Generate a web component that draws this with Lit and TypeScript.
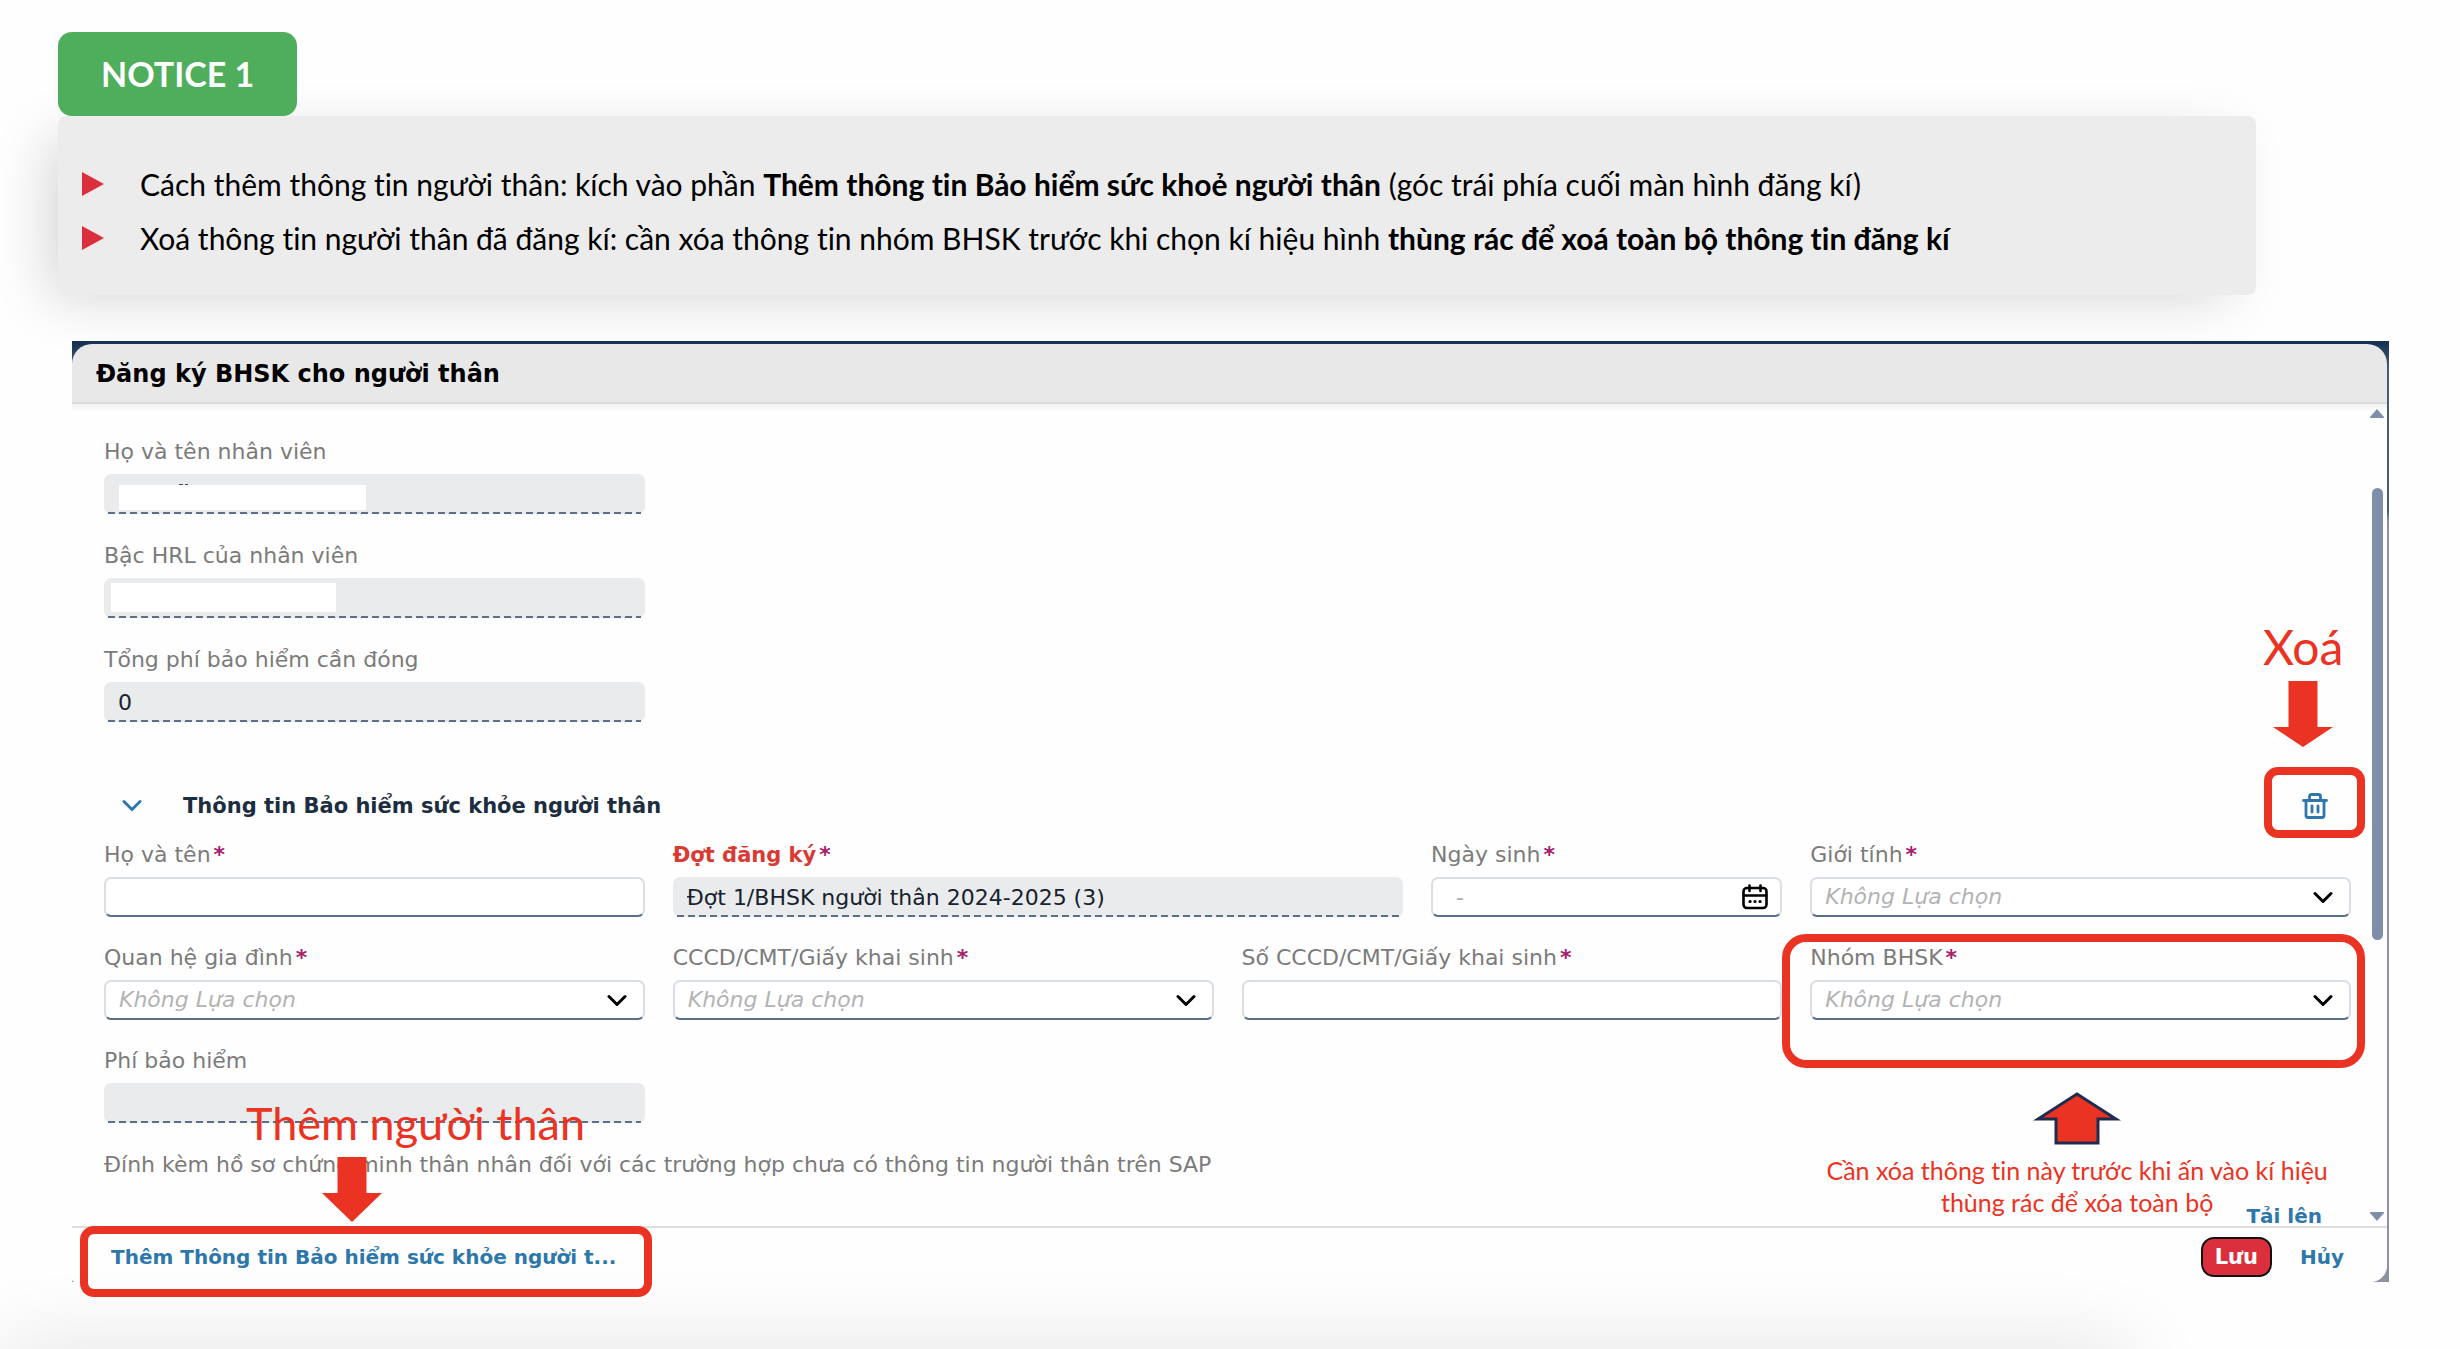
import { LitElement, html, css, nothing, TemplateResult } from "lit";
import { customElement } from "lit/decorators.js";
import { classMap } from "lit/directives/class-map.js";

type Kind = "text" | "readonly" | "select" | "date";

interface Field {
  id: string;
  label: string;
  kind: Kind;
  span: number;
  value?: string;
  required?: boolean;
  alert?: boolean;
  mask?: "wide" | "narrow";
  ringed?: boolean;
}

const employeeFields: Field[] = [
  { id: "emp-name", label: "Họ và tên nhân viên", kind: "readonly", span: 3, mask: "wide" },
  { id: "emp-level", label: "Bậc HRL của nhân viên", kind: "readonly", span: 3, mask: "narrow" },
  { id: "emp-total", label: "Tổng phí bảo hiểm cần đóng", kind: "readonly", span: 3, value: "0" },
];

const relativeFields: Field[] = [
  { id: "rel-name", label: "Họ và tên", kind: "text", span: 3, required: true },
  { id: "rel-round", label: "Đợt đăng ký", kind: "readonly", span: 4, required: true, alert: true, value: "Đợt 1/BHSK người thân 2024-2025 (3)" },
  { id: "rel-birth", label: "Ngày sinh", kind: "date", span: 2, required: true },
  { id: "rel-gender", label: "Giới tính", kind: "select", span: 3, required: true },
  { id: "rel-kin", label: "Quan hệ gia đình", kind: "select", span: 3, required: true },
  { id: "rel-doc", label: "CCCD/CMT/Giấy khai sinh", kind: "select", span: 3, required: true },
  { id: "rel-docno", label: "Số CCCD/CMT/Giấy khai sinh", kind: "text", span: 3, required: true },
  { id: "rel-group", label: "Nhóm BHSK", kind: "select", span: 3, required: true, ringed: true },
  { id: "rel-fee", label: "Phí bảo hiểm", kind: "readonly", span: 3 },
];

@customElement("app-root")
export class AppRoot extends LitElement {
  static styles = css`
    :host {
      display: block;
      position: relative;
      box-sizing: border-box;
      min-height: 100vh;
      padding-top: 32px;
      overflow: hidden;
      background: #fefefe;
      color: #000;
      font-family: "DejaVu Sans", Verdana, sans-serif;
      font-size: 22px;
      line-height: 24px;
      font-variant-ligatures: none;
    }
    * { box-sizing: border-box; }
    button, input, select { font: inherit; color: inherit; margin: 0; }
    button { background: none; border: 0; padding: 0; cursor: pointer; }
    svg { display: block; }

    .badge {
      position: relative;
      width: fit-content;
      margin: 0 0 0 58px;
      padding: 0 43px;
      border-radius: 14px;
      background: #4fae5c;
      color: #fff;
      font-family: Lato, sans-serif;
      font-weight: 700;
      font-size: 34px;
      line-height: 84px;
    }
    .notice {
      margin: 0 204px 0 58px;
      padding: 41px 24px 30px;
      border-radius: 8px;
      background: #ececec;
      box-shadow: -18px 12px 56px -10px rgba(0, 0, 0, 0.17);
      font-family: Lato, sans-serif;
      font-size: 30px;
      line-height: 54px;
    }
    .notice ul { list-style: none; margin: 0; padding: 0; }
    .notice li { display: flex; align-items: center; gap: 36px; }
    .bullet { flex: none; width: 22px; height: 24px; }

    .dialog {
      margin: 46px 71px 0 72px;
      padding: 3px 2px 0 0;
      background: linear-gradient(#14304f 0, #4a5a72 28px, #4a5a72 170px, #8d939c 180px);
    }
    .title {
      margin: 0;
      padding: 0 24px;
      height: 60px;
      border-radius: 20px 20px 0 0;
      border-bottom: 2px solid #dcdcdc;
      background: #e8e8e8;
      font-size: 24px;
      line-height: 60px;
    }
    .body {
      display: flex;
      gap: 20px;
      padding: 0 4px 0 32px;
      background: linear-gradient(#f2f2f2, #fefefe 8px);
    }
    .form { flex: 1; min-width: 0; padding-top: 36px; }
    .grid {
      display: grid;
      grid-template-columns: repeat(12, minmax(0, 1fr));
      column-gap: 28px;
      row-gap: 30px;
    }
    .relative { row-gap: 29px; }
    .single { grid-column: 1 / span 3; }
    .s2 { grid-column: span 2; }
    .s3 { grid-column: span 3; }
    .s4 { grid-column: span 4; }
    .field { position: relative; display: flex; flex-direction: column; gap: 10px; }
    .label { color: #7b7b7b; white-space: nowrap; }
    .alert { color: #d93a32; font-weight: 700; font-size: 21px; }
    .star { color: #a8206b; font-weight: 700; margin-left: 3px; }
    .box { position: relative; display: flex; }
    .control {
      width: 100%;
      height: 40px;
      padding: 0 13px;
      border: 2px solid #d9dfe5;
      border-bottom-color: #5b6f8a;
      border-radius: 7px;
      background: #fff;
      color: #17222f;
      outline: none;
      appearance: none;
    }
    .readonly {
      border: 0;
      background: #eaebed;
      padding: 0 14px;
    }
    .dashes {
      position: absolute;
      left: 4px;
      right: 4px;
      bottom: 0;
      height: 2px;
      background: repeating-linear-gradient(90deg, #5b6f8a 0 7px, transparent 7px 11px);
    }
    .select { font-style: italic; color: #b3b3b3; }
    .date::placeholder { color: #a9a9a9; }
    .date { padding-left: 23px; }
    .chevron { position: absolute; right: 18px; top: 14px; pointer-events: none; }
    .calendar { position: absolute; right: 14px; top: 7px; }
    .mask { position: absolute; background: #fff; }
    .wide { left: 15px; right: 279px; top: 11px; bottom: 4px; }
    .narrow { left: 7px; right: 309px; top: 5px; bottom: 6px; }
    .tilde { position: absolute; left: 75px; top: 9px; }

    .section {
      display: flex;
      align-items: center;
      height: 61px;
      margin: 53px 0 7px;
      padding: 0 23px 0 18px;
    }
    .section h2 {
      flex: 1;
      margin: 0 0 0 41px;
      font-size: 21px;
      color: #1d2d40;
    }
    .trash { position: relative; color: #2e77ab; }

    .attach { position: relative; margin: 30px 0 0; color: #7b7b7b; }
    .upload {
      display: flex;
      justify-content: flex-end;
      margin-top: 29px;
      padding-right: 29px;
      line-height: 20px;
    }
    .link { color: #2e77ab; font-weight: 700; font-size: 20px; text-decoration: none; }

    .scroll {
      display: flex;
      flex-direction: column;
      align-items: center;
      width: 12px;
      padding: 5px 0;
    }
    .before { flex: 70; }
    .thumb { flex: 453; width: 11px; border-radius: 6px; background: #7f8fa9; }
    .after { flex: 272; }

    .footer {
      position: relative;
      display: flex;
      align-items: flex-start;
      justify-content: space-between;
      height: 56px;
      padding: 9px 43px 0 39px;
      border-top: 2px solid #dedede;
      border-radius: 0 0 16px 3px;
      background: #fefefe;
    }
    .add { line-height: 40px; }
    .actions { display: flex; gap: 28px; }
    .save {
      height: 40px;
      padding: 0 12px;
      border: 2px solid #111;
      border-radius: 13px;
      background: #dc2f3e;
      color: #fff;
      font-size: 21px;
      font-weight: 700;
    }

    .ring { position: absolute; border: 8px solid #eb3323; pointer-events: none; }
    .ring-trash { left: -38px; top: -26px; width: 101px; height: 71px; border-radius: 14px; }
    .ring-group { left: -28px; right: -14px; top: -12px; height: 134px; border-radius: 24px; }
    .ring-add { left: 8px; top: -2px; width: 572px; height: 71px; border-radius: 14px; }
    .note {
      position: absolute;
      display: flex;
      flex-direction: column;
      align-items: center;
      color: #eb3323;
      font-family: Lato, sans-serif;
      font-size: 45px;
      line-height: 54px;
      white-space: nowrap;
      pointer-events: none;
    }
    .note-trash { left: -39px; top: -173px; font-size: 48px; }
    .note-add { left: 142px; top: -57px; }
    .note-add svg { margin: 7px 128px 0 0; }
    .note-trash svg { margin-top: 7px; }
    .note-group {
      left: 18px;
      right: 25px;
      top: 146px;
      gap: 9px;
      font-size: 25px;
      line-height: 32px;
      text-align: center;
    }
    .next {
      position: absolute;
      left: 0;
      right: 330px;
      top: 100%;
      height: 60px;
      box-shadow: 0 0 84px rgba(0, 0, 0, 0.12);
    }
  `;

  private chevron(cls: string, color: string) {
    return html`<svg class=${cls} width="20" height="13" viewBox="0 0 20 13" aria-hidden="true">
      <path d="M2 2.5 10 10.5 18 2.5" fill="none" stroke=${color} stroke-width="3" stroke-linecap="round" stroke-linejoin="round" />
    </svg>`;
  }

  private down(w: number, h: number, shaft: number, neck: number) {
    const a = (w - shaft) / 2;
    const b = (w + shaft) / 2;
    return html`<svg width=${w} height=${h} viewBox="0 0 ${w} ${h}" aria-hidden="true">
      <path fill="#eb3323" d="M${a} 0H${b}V${neck}H${w}L${w / 2} ${h}L0 ${neck}H${a}Z" />
    </svg>`;
  }

  private control(f: Field): TemplateResult {
    switch (f.kind) {
      case "select":
        return html`<select id=${f.id} class="control select"><option>Không Lựa chọn</option></select>
          ${this.chevron("chevron", "#000")}`;
      case "date":
        return html`<input id=${f.id} class="control date" type="text" placeholder="-" />
          <button class="calendar" type="button" aria-label=${f.label}>
            <svg width="26" height="26" viewBox="0 0 26 26" fill="none" stroke="#000" stroke-width="2.6" stroke-linecap="round">
              <rect x="1.5" y="4" width="23" height="20" rx="3.5" />
              <path d="M2 11.5H24M7.5 1.5V7M18.5 1.5V7" />
              <path d="M8 17.5h.1M13 17.5h.1M18 17.5h.1" stroke-width="3.2" />
            </svg>
          </button>`;
      case "readonly":
        return html`<input id=${f.id} class="control readonly" type="text" readonly .value=${f.value ?? ""} />
          <span class="dashes"></span>
          ${f.mask ? html`<span class="mask ${f.mask}"></span>` : nothing}
          ${f.mask === "wide"
            ? html`<svg class="tilde" width="10" height="3" viewBox="0 0 10 3" aria-hidden="true"><path d="M0 1h4v1H0zM6 1h3v1H6z" fill="#3d4d63" /></svg>`
            : nothing}`;
      default:
        return html`<input id=${f.id} class="control" type="text" />`;
    }
  }

  private field(f: Field, single = false) {
    const cls = { field: true, single, [`s${f.span}`]: !single };
    return html`<div class=${classMap(cls)}>
      <label class="label" for=${f.id}><span class=${f.alert ? "alert" : ""}>${f.label}</span>${f.required ? html`<span class="star">*</span>` : nothing}</label>
      <div class="box">${this.control(f)}</div>
      ${f.ringed
        ? html`<span class="ring ring-group"></span>
            <div class="note note-group">
              <svg width="88" height="53" viewBox="0 0 88 53" aria-hidden="true">
                <path d="M44 2 83 27H65V51H23V27H5Z" fill="#eb3323" stroke="#1f2c50" stroke-width="3" />
              </svg>
              <span>Cần xóa thông tin này trước khi ấn vào kí hiệu<br />thùng rác để xóa toàn bộ</span>
            </div>`
        : nothing}
    </div>`;
  }

  private bullet() {
    return html`<svg class="bullet" viewBox="0 0 22 24" aria-hidden="true"><path d="M0 0 22 12 0 24Z" fill="#dc2f3e" /></svg>`;
  }

  render() {
    return html`
      <h1 class="badge">NOTICE 1</h1>
      <section class="notice">
        <ul>
          <li>${this.bullet()}<span>Cách thêm thông tin người thân: kích vào phần <b>Thêm thông tin Bảo hiểm sức khoẻ người thân</b> (góc trái phía cuối màn hình đăng kí)</span></li>
          <li>${this.bullet()}<span>Xoá thông tin người thân đã đăng kí: cần xóa thông tin nhóm BHSK trước khi chọn kí hiệu hình <b>thùng rác để xoá toàn bộ thông tin đăng kí</b></span></li>
        </ul>
      </section>

      <section class="dialog">
        <h2 class="title">Đăng ký BHSK cho người thân</h2>
        <div class="body">
          <form class="form">
            <div class="grid">${employeeFields.map((f) => this.field(f, true))}</div>
            <div class="section">
              <button type="button" aria-label="Thu gọn">${this.chevron("", "#2e77ab")}</button>
              <h2>Thông tin Bảo hiểm sức khỏe người thân</h2>
              <button class="trash" type="button" aria-label="Xoá">
                <svg width="26" height="26" viewBox="0 0 26 26" fill="none" stroke="currentColor" stroke-width="2.8" stroke-linecap="round" stroke-linejoin="round">
                  <path d="M1.5 7.5H24.5M7.5 7V3.5Q7.5 1.5 9.5 1.5H16.5Q18.5 1.5 18.5 3.5V7" />
                  <path d="M4 8V22.500Q4 24.500 6 24.500H20Q22 24.500 22 22.500V8M10 13V19M16 13V19" />
                </svg>
                <span class="ring ring-trash"></span>
                <span class="note note-trash">Xoá${this.down(60, 66, 29, 46)}</span>
              </button>
            </div>
            <div class="grid relative">${relativeFields.map((f) => this.field(f))}</div>
            <div class="attach">
              Đính kèm hồ sơ chứng minh thân nhân đối với các trường hợp chưa có thông tin người thân trên SAP
              <div class="note note-add">Thêm người thân${this.down(60, 65, 29, 36)}</div>
            </div>
            <div class="upload"><a class="link" href="#">Tải lên</a></div>
          </form>
          <div class="scroll" aria-hidden="true">
            <svg width="14" height="9" viewBox="0 0 14 9"><path d="M7 0 14 8V9H0V8Z" fill="#7f8fa9" /></svg>
            <span class="before"></span>
            <span class="thumb"></span>
            <span class="after"></span>
            <svg width="14" height="9" viewBox="0 0 14 9"><path d="M7 9 14 1V0H0V1Z" fill="#7f8fa9" /></svg>
          </div>
        </div>
        <footer class="footer">
          <a class="link add" href="#">Thêm Thông tin Bảo hiểm sức khỏe người t...</a>
          <div class="actions">
            <button class="save" type="button">Lưu</button>
            <button class="link" type="button">Hủy</button>
          </div>
          <span class="ring ring-add"></span>
        </footer>
      </section>
      <div class="next"></div>
    `;
  }
}
